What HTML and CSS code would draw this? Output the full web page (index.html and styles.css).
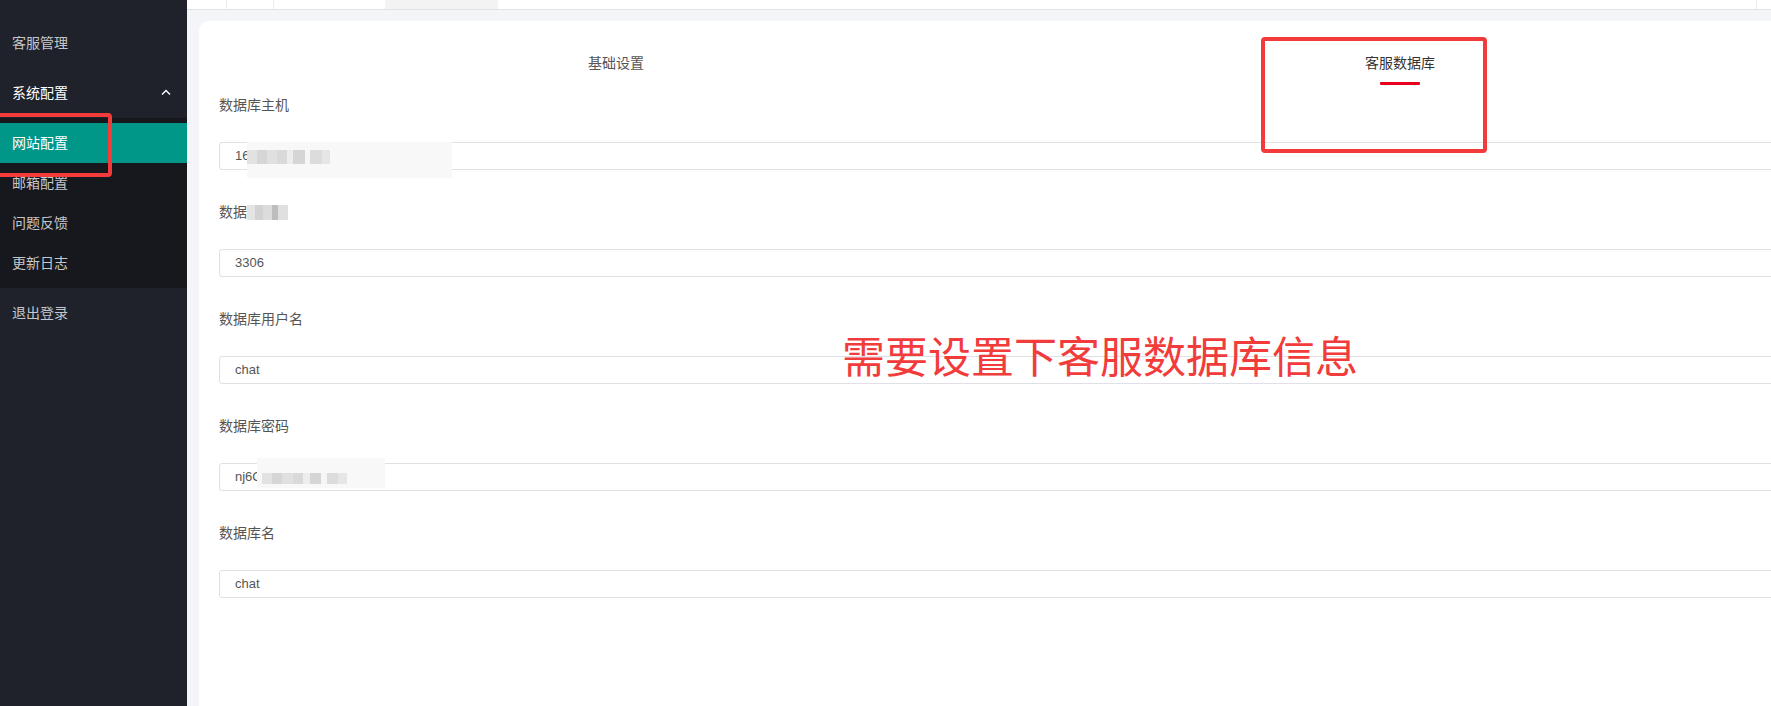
FILE: index.html
```html
<html>
<head>
    <meta charset="utf-8">
    <title>网站配置</title>
    <link rel="stylesheet" href="styles.css">
</head>
<body>
    <aside class="sidebar">
        <div class="nav-item">客服管理</div>
        <div class="nav-item nav-item--open">
            系统配置
            <svg class="chevron" viewBox="0 0 10 6" width="10" height="6">
                <path d="M1,5.5 5,1.5 9,5.5" fill="none" stroke="#fff" stroke-width="1.4"/>
            </svg>
        </div>
        <div class="submenu">
            <div class="sub-item sub-item--active">网站配置</div>
            <div class="sub-item">邮箱配置</div>
            <div class="sub-item">问题反馈</div>
            <div class="sub-item">更新日志</div>
        </div>
        <div class="nav-item">退出登录</div>
    </aside>

    <main class="main">
        <div class="topbar">
            <div class="topbar__cell topbar__cell--a"></div>
            <div class="topbar__cell topbar__cell--b"></div>
            <div class="topbar__gap"></div>
            <div class="topbar__cell topbar__cell--current"></div>
            <div class="topbar__fill"></div>
            <div class="topbar__cell topbar__cell--end"></div>
        </div>

        <div class="content">
            <div class="card">
                <div class="tabs">
                    <div class="tab">基础设置</div>
                    <div class="tab tab--active">客服数据库</div>
                </div>

                <div class="field">
                    <div class="field__label">数据库主机</div>
                    <div class="field__input">
                        16
                        <span class="mosaic mosaic--host"><span class="mosaic__blocks"></span></span>
                    </div>
                </div>
                <div class="field">
                    <div class="field__label">数据<span class="mosaic-inline"></span></div>
                    <div class="field__input">3306</div>
                </div>
                <div class="field">
                    <div class="field__label">数据库用户名</div>
                    <div class="field__input">chat</div>
                </div>
                <div class="field">
                    <div class="field__label">数据库密码</div>
                    <div class="field__input">
                        nj6C
                        <span class="mosaic mosaic--pass"><span class="mosaic__blocks"></span></span>
                    </div>
                </div>
                <div class="field">
                    <div class="field__label">数据库名</div>
                    <div class="field__input">chat</div>
                </div>
            </div>
        </div>
    </main>

    <!-- annotations drawn over the screenshot -->
    <div class="mark mark--menu"></div>
    <div class="mark mark--tab"></div>
    <div class="note">需要设置下客服数据库信息</div>
</body>
</html>
```

FILE: styles.css
```css
* {
    box-sizing: border-box;
    margin: 0;
    padding: 0;
}
body {
    display: flex;
    height: 100vh;
    overflow: hidden;
    font: 14px/20px "Liberation Sans", "Noto Sans CJK SC", sans-serif;
    color: #555;
    background: #f4f5f9;
}

/* Sidebar */
.sidebar {
    width: 187px;
    flex: none;
    background: #1f222a;
    padding-top: 18px;
}
.nav-item {
    height: 50px;
    display: flex;
    align-items: center;
    padding-left: 12px;
    color: #c6c7ca;
    position: relative;
}
.nav-item--open {
    color: #fff;
}
.chevron {
    position: absolute;
    left: 161px;
    top: 21px;
}
.submenu {
    background: #17181d;
    padding: 5px 0;
}
.sub-item {
    height: 40px;
    display: flex;
    align-items: center;
    padding-left: 12px;
    color: #c6c7ca;
}
.sub-item--active {
    background: #009688;
    color: #fff;
}

/* Main */
.main {
    flex: 1;
    min-width: 0;
    display: flex;
    flex-direction: column;
    overflow: hidden;
}
.topbar {
    height: 10px;
    flex: none;
    display: flex;
    background: #fff;
    border-bottom: 1px solid #e2e2e4;
}
.topbar__cell--a {
    width: 40px;
    border-right: 1px solid #ececec;
}
.topbar__cell--b {
    width: 47px;
    border-right: 1px solid #ececec;
}
.topbar__gap {
    width: 111px;
}
.topbar__cell--current {
    width: 113px;
    background: #f3f3f3;
}
.topbar__fill {
    flex: 1;
}
.topbar__cell--end {
    width: 15px;
    border-left: 1px solid #ececec;
}
.content {
    flex: 1;
    padding: 11px 0 0 12px;
}
.card {
    width: 1600px;
    height: 100%;
    background: #fff;
    border-radius: 10px 0 0 0;
    padding: 32px 20px 0;
}

/* Tabs */
.tabs {
    display: grid;
    grid-template-columns: 784px 784px;
    margin-left: 5px;
    height: 42px;
}
.tab {
    text-align: center;
    color: #555;
}
.tab--active {
    color: #333;
}
.tab--active::after {
    content: "";
    display: block;
    width: 40px;
    height: 3px;
    margin: 9px auto 0;
    background: #e6001e;
    border-radius: 1px;
}

/* Form */
.field {
    height: 107px;
}
.field__label {
    height: 20px;
    margin-bottom: 27px;
    color: #555;
    display: flex;
    align-items: center;
}
.field__input {
    position: relative;
    height: 28px;
    border: 1px solid #e0e0e6;
    border-radius: 3px;
    padding-left: 15px;
    font-size: 13px;
    line-height: 26px;
    color: #555;
}

/* Blurred secrets */
.mosaic {
    position: absolute;
    background: #f8f8f8;
}
.mosaic--host {
    left: 27px;
    top: -1px;
    width: 205px;
    height: 36px;
}
.mosaic--pass {
    left: 37px;
    top: -6px;
    width: 128px;
    height: 30px;
}
.mosaic__blocks {
    position: absolute;
    left: 0;
    background: linear-gradient(90deg,
        #e2e2e2 0 12%, #d6d6d6 12% 24%, #e0e0e0 24% 36%, #d9d9d9 36% 48%,
        #ededed 48% 56%, #d5d5d5 56% 70%, #f6f6f6 70% 76%, #dcdcdc 76% 90%, #e6e6e6 90% 100%);
}
.mosaic--host .mosaic__blocks {
    top: 8px;
    width: 83px;
    height: 14px;
}
.mosaic--pass .mosaic__blocks {
    left: 5px;
    top: 15px;
    width: 85px;
    height: 11px;
}
.mosaic-inline {
    display: inline-block;
    width: 41px;
    height: 15px;
    background: linear-gradient(90deg,
        #e4e4e4 0 20%, #d2d2d2 20% 40%, #dcdcdc 40% 60%, #bdbdbd 60% 75%, #e0e0e0 75% 100%);
}

/* Annotations */
.mark {
    position: absolute;
    border: 4px solid #f43b3b;
    border-radius: 4px;
}
.mark--menu {
    left: -6px;
    top: 113px;
    width: 118px;
    height: 64px;
}
.mark--tab {
    left: 1261px;
    top: 37px;
    width: 226px;
    height: 116px;
}
.note {
    position: absolute;
    left: 842px;
    top: 333px;
    font: 43px/43px "Noto Sans CJK SC", sans-serif;
    color: #f23c3c;
    white-space: nowrap;
}
```
